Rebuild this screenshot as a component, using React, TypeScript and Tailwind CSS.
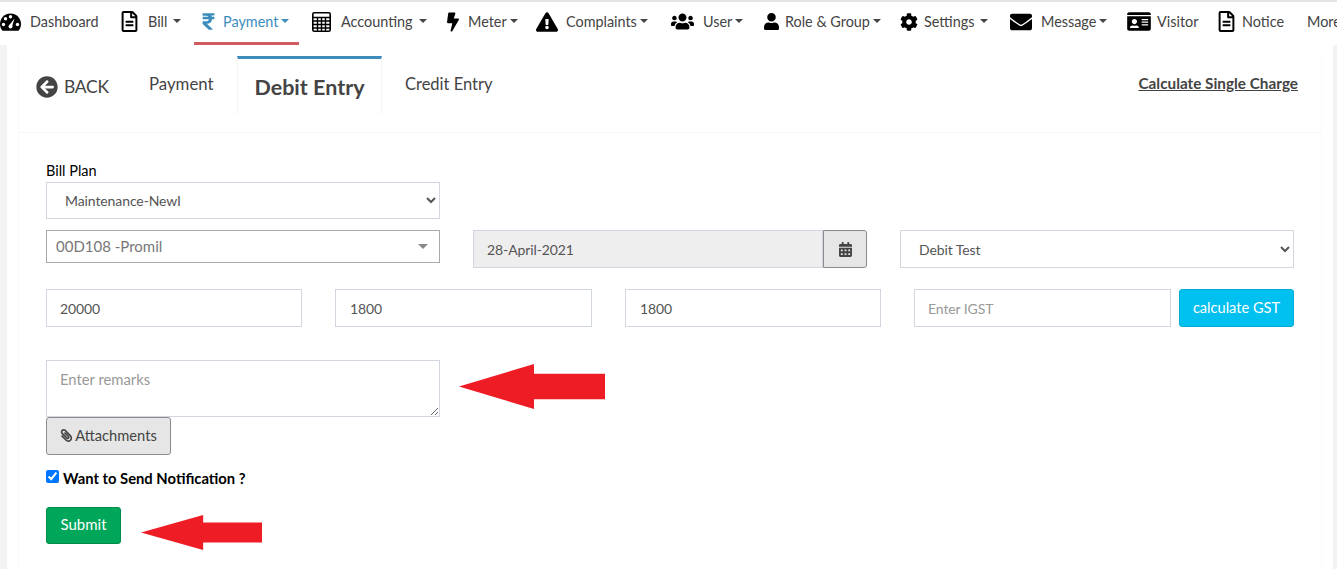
import type { ReactNode } from "react";
import {
  FaArrowCircleLeft,
  FaBolt,
  FaCalendarAlt,
  FaCog,
  FaEnvelope,
  FaExclamationTriangle,
  FaIdCard,
  FaPaperclip,
  FaRegFileAlt,
  FaRupeeSign,
  FaUser,
  FaUsers,
} from "react-icons/fa";

function GaugeIcon() {
  return (
    <svg viewBox="0 0 21 18" className="w-[21px] h-[18px]">
      <path d="M10.500 0.500C4.700 0.500 0 5.200 0 11c0 2.600 0.900 5 2.500 6.800h16C20.100 16 21 13.600 21 11 21 5.200 16.300 0.500 10.500 0.500Z" fill="#000" />
      <circle cx="3.500" cy="11.500" r="1.700" fill="#fff" />
      <circle cx="5.500" cy="5.800" r="1.700" fill="#fff" />
      <circle cx="10.500" cy="3.700" r="1.700" fill="#fff" />
      <circle cx="17.500" cy="11.500" r="1.700" fill="#fff" />
      <path d="M9 12.500 14.500 5.500 12 13.500Z" fill="#fff" />
      <circle cx="10.500" cy="13.500" r="2" fill="#fff" />
    </svg>
  );
}

function TableIcon() {
  return (
    <svg viewBox="0 0 19 20" className="w-[19px] h-[20px]" fill="none" stroke="#000">
      <rect x="0.800" y="0.800" width="17.400" height="18.400" rx="1.500" strokeWidth="1.600" />
      <path d="M1 5.500h17M1 9h17M1 12.500h17M1 16h17M5.500 5.500V19M9.500 5.500V19M13.500 5.500V19" strokeWidth="1.400" />
    </svg>
  );
}

function Caret({ spaced }: { spaced?: boolean }) {
  return <span className={`${spaced ? "ml-[6px]" : "ml-[3px]"} w-0 h-0 border-x-[4px] border-x-transparent border-t-[4px] border-t-current`} />;
}

function NavItem({ icon, label, caret, spaced, gap, width, active }: { icon: ReactNode; label: string; caret?: boolean; spaced?: boolean; gap: string; width: string; active?: boolean }) {
  return (
    <div className={`flex items-center h-[43px] shrink-0 ${gap} ${active ? "text-[#3c8dbc] border-b-[3px] border-[#d15b5f] pb-[1px] px-2 -mx-2" : "pb-[4px]"}`}>
      <span className={`flex items-center ${active ? "" : "text-black"}`}>{icon}</span>
      <span className={`flex items-center whitespace-nowrap ${width}`}>
        {label}
        {caret && <Caret spaced={spaced} />}
      </span>
    </div>
  );
}

function Arrow({ className }: { className: string }) {
  return (
    <svg viewBox="0 0 146 46" preserveAspectRatio="none" className={`absolute ${className}`} fill="#ee1c25">
      <path d="M0 23 L75 0 V10 H146 V36 H75 V46 Z" />
    </svg>
  );
}

const field = "h-[38px] border border-[#d2d6de] text-[14px] tracking-[-0.1px] text-[#555] outline-none";

export default function App() {
  return (
    <div className="relative h-[569px] overflow-hidden bg-[#f3f3f3] text-[#444] font-['Lato','Liberation_Sans',sans-serif]">
      <nav className="h-[45px] bg-white border-t-2 border-[#e4e4e4] flex gap-[21px] text-[14.4px] overflow-hidden">
        <NavItem icon={<GaugeIcon />} label="Dashboard" gap="gap-[9px]" width="w-[70px]" />
        <NavItem icon={<FaRegFileAlt className="w-[17px] h-[21px]" />} label="Bill" caret spaced gap="gap-[10px]" width="w-[33px]" />
        <NavItem active icon={<FaRupeeSign className="w-[13px] h-[19px]" />} label="Payment" caret gap="gap-[8px]" width="w-[68px]" />
        <NavItem icon={<TableIcon />} label="Accounting" caret spaced gap="gap-[10px]" width="w-[85px]" />
        <NavItem icon={<FaBolt className="w-[12px] h-[20px]" />} label="Meter" caret gap="gap-[9px]" width="w-[47px]" />
        <NavItem icon={<FaExclamationTriangle className="w-[22px] h-[20px]" />} label="Complaints" caret gap="gap-[8px]" width="w-[84px]" />
        <NavItem icon={<FaUsers className="w-[23px] h-[23px]" />} label="User" caret gap="gap-[9px]" width="w-[40px]" />
        <NavItem icon={<FaUser className="w-[15px] h-[19px]" />} label="Role & Group" caret gap="gap-[6px]" width="w-[94px]" />
        <NavItem icon={<FaCog className="w-[18px] h-[18px]" />} label="Settings" caret spaced gap="gap-[6px]" width="w-[65px]" />
        <NavItem icon={<FaEnvelope className="w-[22px] h-[22px]" />} label="Message" caret gap="gap-[9px]" width="w-[65px]" />
        <NavItem icon={<FaIdCard className="w-[24px] h-[21px]" />} label="Visitor" gap="gap-[6px]" width="w-[40px]" />
        <NavItem icon={<FaRegFileAlt className="w-[17px] h-[21px]" />} label="Notice" gap="gap-[7px]" width="w-[41px]" />
        <div className="flex items-center h-[39px] ml-[3px] shrink-0">More</div>
      </nav>

      <main className="ml-[7px] mr-[4px] h-[524px] bg-white pt-[11px] px-[11px]">
        <div className="h-full border-x border-[#fafafa]">
          <div className="h-[77px] border-b border-[#f6f6f6] flex items-start pl-[17px] pr-[23px]">
            <a className="w-[113px] flex items-center gap-[6px] h-[62px] text-[17.500px] tracking-[-0.3px]">
              <FaArrowCircleLeft className="w-[22px] h-[22px] text-[#444]" />
              BACK
            </a>
            <a className="w-[88px] h-[56px] flex items-center text-[16.800px]">Payment</a>
            <a className="w-[145px] h-[58px] border-t-[3px] border-x border-t-[#3c8dbc] border-x-[#f4f4f4] flex items-center justify-center text-[21.500px] font-bold pt-[2px]">
              Debit Entry
            </a>
            <a className="h-[56px] flex items-center text-[16.500px] ml-[23px]">Credit Entry</a>
            <a className="ml-auto h-[54px] flex items-center text-[15.300px] font-bold underline">Calculate Single Charge</a>
          </div>

          <form className="pl-[27px] w-[1276px]">
            <label className="block pt-[29px] h-[49px] text-[14.500px] leading-[18px] text-black">Bill Plan</label>
            <select className="h-[37px] border border-[#d2d6de] text-[14px] tracking-[-0.1px] text-[#555] outline-none bg-white block w-[394px] pl-[14px]" defaultValue="m">
              <option value="m">Maintenance-NewI</option>
            </select>

            <div className="grid grid-cols-3 gap-[33px] w-[1248px] mt-[11px]">
              <div className="h-[33px] border border-[#aaa] flex items-center justify-between pl-[9px] pr-[11px] pb-[1px] text-[15px] text-[#777]">
                00D108 -Promil
                <span className="w-0 h-0 border-x-[5px] border-x-transparent border-t-[5px] border-t-[#888]" />
              </div>
              <div className="flex h-[38px]">
                <input disabled value="28-April-2021" className={`${field} bg-[#eee] flex-1 min-w-0 px-[13px]`} />
                <span className="w-[44px] flex items-center justify-center bg-[#e6e6e6] border border-[#8a8a8a] rounded-r-[3px]">
                  <FaCalendarAlt className="w-[13px] h-[15px] text-[#444]" />
                </span>
              </div>
              <select className={`${field} bg-white w-full pl-[14px]`} defaultValue="d">
                <option value="d">Debit Test</option>
              </select>
            </div>

            <div className="flex gap-[33px] mt-[21px]">
              <input defaultValue="20000" className={`${field} bg-white w-[256px] px-[13px]`} />
              <input defaultValue="1800" className={`${field} bg-white w-[257px] px-[14px]`} />
              <input defaultValue="1800" className={`${field} bg-white w-[256px] px-[14px]`} />
              <div className="flex gap-2">
                <input placeholder="Enter IGST" className={`${field} bg-white w-[257px] px-[13px] placeholder:text-[#999]`} />
                <button type="button" className="w-[115px] h-[38px] pb-px bg-[#00c0ef] border border-[#00acd6] rounded-[3px] text-white text-[14.600px]">
                  calculate GST
                </button>
              </div>
            </div>

            <textarea placeholder="Enter remarks" className="block w-[394px] h-[57px] mt-[33px] border border-[#d2d6de] px-[13px] py-[8px] text-[14.800px] leading-[20px] outline-none placeholder:text-[#999]" />
            <button type="button" className="w-[125px] h-[38px] pb-[2px] flex items-center justify-center gap-[2px] bg-[#e6e6e6] border border-[#8c8c8c] rounded-[3px] text-[14.700px]">
              <FaPaperclip className="w-[13px] h-[13px] -scale-x-100" />
              Attachments
            </button>

            <label className="flex items-center gap-[4px] mt-[14px] h-[18px] text-[14.800px] font-bold text-black">
              <input type="checkbox" defaultChecked className="w-[13px] h-[13px] m-0 -mt-[3px]" />
              Want to Send Notification ?
            </label>

            <button type="button" className="block w-[75px] h-[37px] pb-[2px] mt-[20px] bg-[#00a65a] border border-[#008d4c] rounded-[3px] text-white text-[15px]">
              Submit
            </button>
          </form>
        </div>
      </main>

      <Arrow className="left-[459px] top-[364px] w-[146px] h-[45px]" />
      <Arrow className="left-[141px] top-[515px] w-[121px] h-[35px]" />
    </div>
  );
}
